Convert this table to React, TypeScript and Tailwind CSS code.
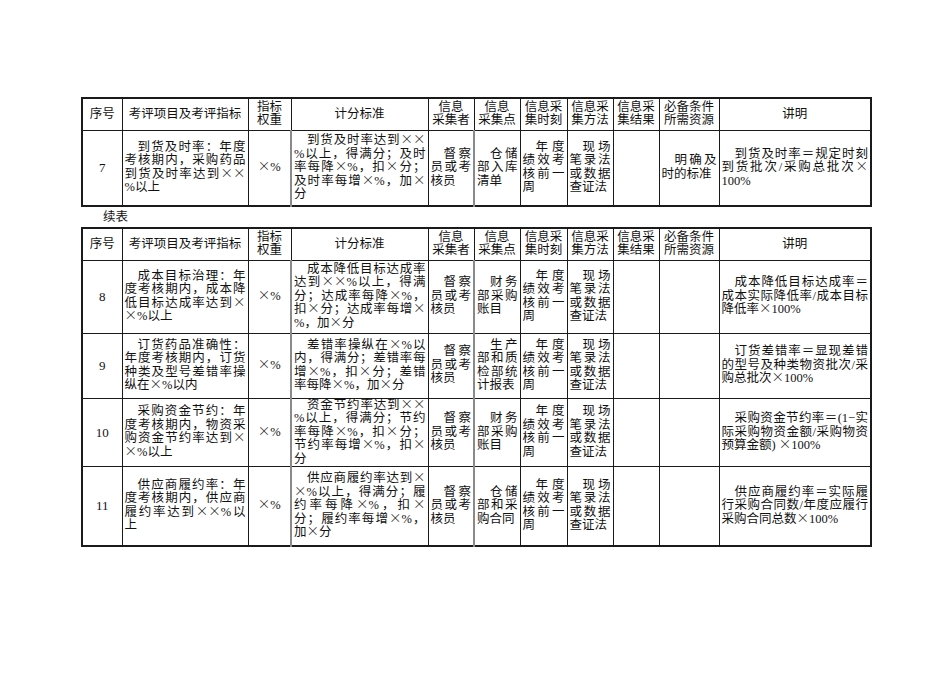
type Row = {
  no: string
  item: string[]
  weight: string
  score: string[]
  who: string[]
  where: string[]
  when: string[]
  how: string[]
  result: string[]
  need: string[]
  note: string[]
  h: string
}

const widths = [
  'w-[40px]',
  'w-[126px]',
  'w-[43px]',
  'w-[137px]',
  'w-[46px]',
  'w-[46px]',
  'w-[47px]',
  'w-[46px]',
  'w-[46px]',
  'w-[60px]',
  'w-[152px]',
]

const heads: string[][] = [
  ['序号'],
  ['考评项目及考评指标'],
  ['指标', '权重'],
  ['计分标准'],
  ['信息', '采集者'],
  ['信息', '采集点'],
  ['信息采', '集时刻'],
  ['信息采', '集方法'],
  ['信息采', '集结果'],
  ['必备条件', '所需资源'],
  ['讲明'],
]

const who = ['督察', '员或考', '核员']
const when = ['年度', '绩效考', '核前一', '周']
const how = ['现场', '笔录法', '或数据', '查证法']

const first: Row[] = [
  {
    no: '7',
    item: ['到货及时率：年度', '考核期内，采购药品', '到货及时率达到××', '%以上'],
    weight: '×%',
    score: ['到货及时率达到××', '%以上，得满分；及时', '率每降×%，扣×分；', '及时率每增×%，加×', '分'],
    who,
    where: ['仓储', '部入库', '清单'],
    when,
    how,
    result: [],
    need: ['明确及', '时的标准'],
    note: ['到货及时率＝规定时刻', '到货批次/采购总批次×', '100%'],
    h: 'h-[76px]',
  },
]

const second: Row[] = [
  {
    no: '8',
    item: ['成本目标治理：年', '度考核期内，成本降', '低目标达成率达到×', '×%以上'],
    weight: '×%',
    score: ['成本降低目标达成率', '达到××%以上，得满', '分；达成率每降×%，', '扣×分；达成率每增×', '%，加×分'],
    who,
    where: ['财务', '部采购', '账目'],
    when,
    how,
    result: [],
    need: [],
    note: ['成本降低目标达成率＝', '成本实际降低率/成本目标', '降低率×100%'],
    h: 'h-[73px]',
  },
  {
    no: '9',
    item: ['订货药品准确性：', '年度考核期内，订货', '种类及型号差错率操', '纵在×%以内'],
    weight: '×%',
    score: ['差错率操纵在×%以', '内，得满分；差错率每', '增×%，扣×分；差错', '率每降×%，加×分'],
    who,
    where: ['生产', '部和质', '检部统', '计报表'],
    when,
    how,
    result: [],
    need: [],
    note: ['订货差错率＝显现差错', '的型号及种类物资批次/采', '购总批次×100%'],
    h: 'h-[65px]',
  },
  {
    no: '10',
    item: ['采购资金节约：年', '度考核期内，物资采', '购资金节约率达到×', '×%以上'],
    weight: '×%',
    score: ['资金节约率达到××', '%以上，得满分；节约', '率每降×%，扣×分；', '节约率每增×%，扣×', '分'],
    who,
    where: ['财务', '部采购', '账目'],
    when,
    how,
    result: [],
    need: [],
    note: ['采购资金节约率＝(1−实', '际采购物资金额/采购物资', '预算金额) ×100%'],
    h: 'h-[67px]',
  },
  {
    no: '11',
    item: ['供应商履约率：年', '度考核期内，供应商', '履约率达到××%以', '上'],
    weight: '×%',
    score: ['供应商履约率达到×', '×%以上，得满分；履', '约率每降×%，扣×', '分；履约率每增×%，', '加×分'],
    who,
    where: ['仓储', '部和采', '购合同'],
    when,
    how,
    result: [],
    need: [],
    note: ['供应商履约率＝实际履', '行采购合同数/年度应履行', '采购合同总数×100%'],
    h: 'h-[79px]',
  },
]

// the printed × is a full-width sign
function Txt({ s }: { s: string }) {
  const parts = s.split('×')
  return (
    <>
      {parts.map((p, i) => (
        <span key={i}>
          {i > 0 && (
            <span className="font-['Noto_Sans_CJK_SC',sans-serif] [font-feature-settings:'fwid'] font-light leading-[0]">×</span>
          )}
          {p}
        </span>
      ))}
    </>
  )
}

// justified lines, first one indented like the printed page
function Lines({ lines }: { lines: string[] }) {
  return (
    <div>
      {lines.map((l, i) => (
        <div
          key={i}
          className={
            (i === 0 ? 'indent-[13px] ' : '') +
            (i < lines.length - 1 ? 'text-justify [text-align-last:justify] ' : 'text-left ') +
            'whitespace-nowrap'
          }
        >
          <Txt s={l} />
        </div>
      ))}
    </div>
  )
}

const cell = 'border border-[#1a1a1a] px-[2px] align-middle'

function Table({ rows }: { rows: Row[] }) {
  return (
    <table className="table-fixed w-[789px] border-collapse border-2 border-[#1a1a1a]">
      <colgroup>
        {widths.map((w, i) => (
          <col key={i} className={w} />
        ))}
      </colgroup>
      <thead>
        <tr className="h-[32px]">
          {heads.map((h, i) => (
            <th key={i} className={cell + ' font-normal text-center leading-[13px]'}>
              {h.map((t, j) => (
                <div key={j}>{t}</div>
              ))}
            </th>
          ))}
        </tr>
      </thead>
      <tbody>
        {rows.map((r) => (
          <tr key={r.no} className={r.h}>
            <td className={cell + ' text-center text-[13px]'}>{r.no}</td>
            <td className={cell}>
              <Lines lines={r.item} />
            </td>
            <td className={cell + ' text-center'}>
              <Txt s={r.weight} />
            </td>
            <td className={cell + ' border-l-2 border-l-[#8a8a8a]'}>
              <Lines lines={r.score} />
            </td>
            <td className={cell}>
              <Lines lines={r.who} />
            </td>
            <td className={cell + ' border-l-2 border-l-[#8a8a8a]'}>
              <Lines lines={r.where} />
            </td>
            <td className={cell}>
              <Lines lines={r.when} />
            </td>
            <td className={cell}>
              <Lines lines={r.how} />
            </td>
            <td className={cell}>
              <Lines lines={r.result} />
            </td>
            <td className={cell}>
              <Lines lines={r.need} />
            </td>
            <td className={cell}>
              <Lines lines={r.note} />
            </td>
          </tr>
        ))}
      </tbody>
    </table>
  )
}

export default function App() {
  return (
    <div className="w-[950px] h-[683px] bg-white text-[#111] text-[12.5px] leading-[13.5px] font-['Liberation_Serif','Noto_Sans_CJK_SC',serif] pl-[81px] pt-[97px]">
      <Table rows={first} />
      <div className="h-[20px] pl-[22px] pt-[3px] leading-[14px]">续表</div>
      <Table rows={second} />
    </div>
  )
}
